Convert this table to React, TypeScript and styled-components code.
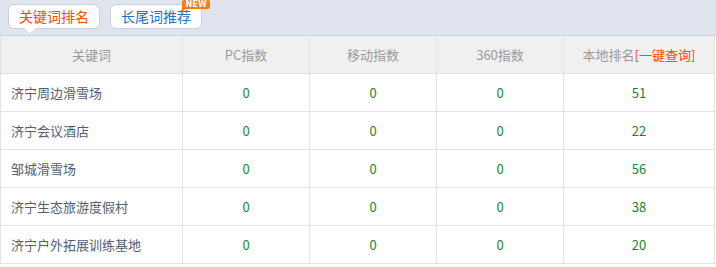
import * as React from "react";
import styled, { createGlobalStyle } from "styled-components";

const GlobalStyle = createGlobalStyle`
  html, body {
    margin: 0;
    padding: 0;
    background: #fff;
    font-family: "Noto Sans CJK SC", "Noto Sans", sans-serif;
  }
`;

const Wrap = styled.div`
  width: 716px;
  height: 267px;
  overflow: hidden;
`;

const TabBar = styled.div`
  height: 36px;
  box-sizing: border-box;
  background: #e0e4ef;
  border-bottom: 1px solid #cdd2e2;
  display: flex;
  align-items: flex-start;
  gap: 10px;
  padding: 4px 0 0 8px;
`;

const Tab = styled.div<{ $active?: boolean }>`
  position: relative;
  height: 25px;
  box-sizing: border-box;
  padding: 0 10px;
  background: #fff;
  border: 1px solid #c8cfdf;
  border-radius: 6px;
  font-size: 14px;
  line-height: 23px;
  color: ${(p) => (p.$active ? "#ff4a00" : "#1f73c9")};

  ${(p) =>
    p.$active &&
    `
    &::after {
      content: "";
      position: absolute;
      left: 15px;
      bottom: -5px;
      border-left: 6px solid transparent;
      border-right: 6px solid transparent;
      border-top: 5px solid #fff;
    }
  `}
`;

const NewBadge = styled.span`
  position: absolute;
  right: -9px;
  top: -5px;
  background: #f77b0f;
  color: #fff;
  font-family: "DejaVu Sans", sans-serif;
  font-weight: bold;
  font-size: 8px;
  line-height: 9px;
  padding: 0 3px;
  border-radius: 2px 2px 2px 0;
  letter-spacing: 0.2px;

  &::after {
    content: "";
    position: absolute;
    left: 0;
    bottom: -3px;
    border-left: 3px solid #f77b0f;
    border-bottom: 3px solid transparent;
  }
`;

const Table = styled.table`
  width: 715px;
  border-collapse: collapse;
  table-layout: fixed;
  font-size: 13px;
`;

const Th = styled.th`
  height: 37px;
  padding: 0;
  background: #f0f0f0;
  color: #9a9a9a;
  font-weight: normal;
  border: 1px solid #e3e3e3;
  border-top: none;
  text-align: center;
`;

const QuickLink = styled.span`
  color: #ff4a00;
`;

const Td = styled.td<{ $left?: boolean }>`
  height: 37px;
  padding: ${(p) => (p.$left ? "0 0 0 10px" : "0")};
  border: 1px solid #e3e3e3;
  text-align: ${(p) => (p.$left ? "left" : "center")};
  color: ${(p) => (p.$left ? "#525d78" : "#17862c")};
`;

const rows = [
  { kw: "济宁周边滑雪场", rank: 51 },
  { kw: "济宁会议酒店", rank: 22 },
  { kw: "邹城滑雪场", rank: 56 },
  { kw: "济宁生态旅游度假村", rank: 38 },
  { kw: "济宁户外拓展训练基地", rank: 20 },
];

const App = () => (
  <Wrap>
    <GlobalStyle />
    <TabBar>
      <Tab $active>关键词排名</Tab>
      <Tab>
        长尾词推荐
        <NewBadge>NEW</NewBadge>
      </Tab>
    </TabBar>
    <Table>
      <colgroup>
        <col style={{ width: 182 }} />
        <col style={{ width: 127 }} />
        <col style={{ width: 127 }} />
        <col style={{ width: 127 }} />
        <col />
      </colgroup>
      <thead>
        <tr>
          <Th>关键词</Th>
          <Th>PC指数</Th>
          <Th>移动指数</Th>
          <Th>360指数</Th>
          <Th>
            本地排名<QuickLink>[一键查询]</QuickLink>
          </Th>
        </tr>
      </thead>
      <tbody>
        {rows.map((r) => (
          <tr key={r.kw}>
            <Td $left>{r.kw}</Td>
            <Td>0</Td>
            <Td>0</Td>
            <Td>0</Td>
            <Td>{r.rank}</Td>
          </tr>
        ))}
      </tbody>
    </Table>
  </Wrap>
);

export default App;
